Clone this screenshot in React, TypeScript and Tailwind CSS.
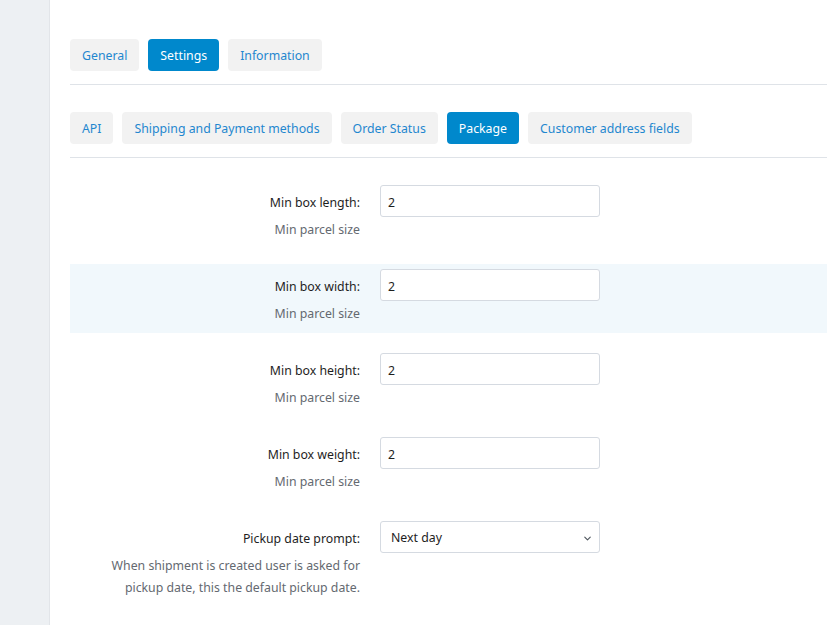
import { ChevronDown } from "lucide-react"

const topTabs = ["General", "Settings", "Information"]
const subTabs = ["API", "Shipping and Payment methods", "Order Status", "Package", "Customer address fields"]

const rows = [
  { label: "Min box length:", desc: "Min parcel size" },
  { label: "Min box width:", desc: "Min parcel size", shaded: true },
  { label: "Min box height:", desc: "Min parcel size" },
  { label: "Min box weight:", desc: "Min parcel size" },
]

function Tab({ label, active }: { label: string; active?: boolean }) {
  return (
    <button
      className={`h-8 px-3 pt-[3px] rounded-[4px] text-[12.3px] ${
        active ? "bg-[#0088cc] text-white" : "bg-[#f2f2f2] text-[#1f87cf]"
      }`}
    >
      {label}
    </button>
  )
}

export default function App() {
  return (
    <div className="flex min-h-[625px] bg-white text-[12.3px] text-[#1e1e1e]" style={{ fontFamily: '"Noto Sans", "Open Sans", sans-serif' }}>
      <aside className="w-[50px] shrink-0 bg-[#edf0f3] border-r border-[#e2e5e9]" />

      <main className="flex-1 pl-5 pt-[39px]">
        <div className="flex gap-[9px] pb-[13px] border-b border-[#dfe3e8]">
          {topTabs.map(t => <Tab key={t} label={t} active={t === "Settings"} />)}
        </div>

        <div className="flex gap-[9px] mt-[27px] pb-[13px] border-b border-[#dfe3e8]">
          {subTabs.map(t => <Tab key={t} label={t} active={t === "Package"} />)}
        </div>

        <div className="mt-[22px]">
          {rows.map(r => (
            <div key={r.label} className={`flex h-[69px] mb-[15px] pt-[5px] ${r.shaded ? "bg-[#f1f8fc]" : ""}`}>
              <div className="w-[290px] pt-[2px] text-right">
                <div className="h-8 leading-8">{r.label}</div>
                <div className="leading-[22px] text-[#646970]">{r.desc}</div>
              </div>
              <input
                defaultValue="2"
                className="ml-5 w-[220px] h-8 px-[7px] pt-[2px] bg-white border border-[#d5dae1] rounded-[3px] text-[12.3px] outline-none"
              />
            </div>
          ))}

          <div className="flex pt-[5px]">
            <div className="w-[290px] pt-[2px] text-right">
              <div className="h-8 leading-8">Pickup date prompt:</div>
              <div className="leading-[22px] text-[#646970]">
                When shipment is created user is asked for<br />pickup date, this the default pickup date.
              </div>
            </div>
            <div className="ml-5 w-[220px] h-8 pl-[10px] pr-[6px] pt-[2px] bg-white border border-[#d5dae1] rounded-[3px] flex items-center justify-between">
              <span>Next day</span>
              <ChevronDown size={11} strokeWidth={2.5} className="text-[#50575e]" />
            </div>
          </div>
        </div>
      </main>
    </div>
  )
}
